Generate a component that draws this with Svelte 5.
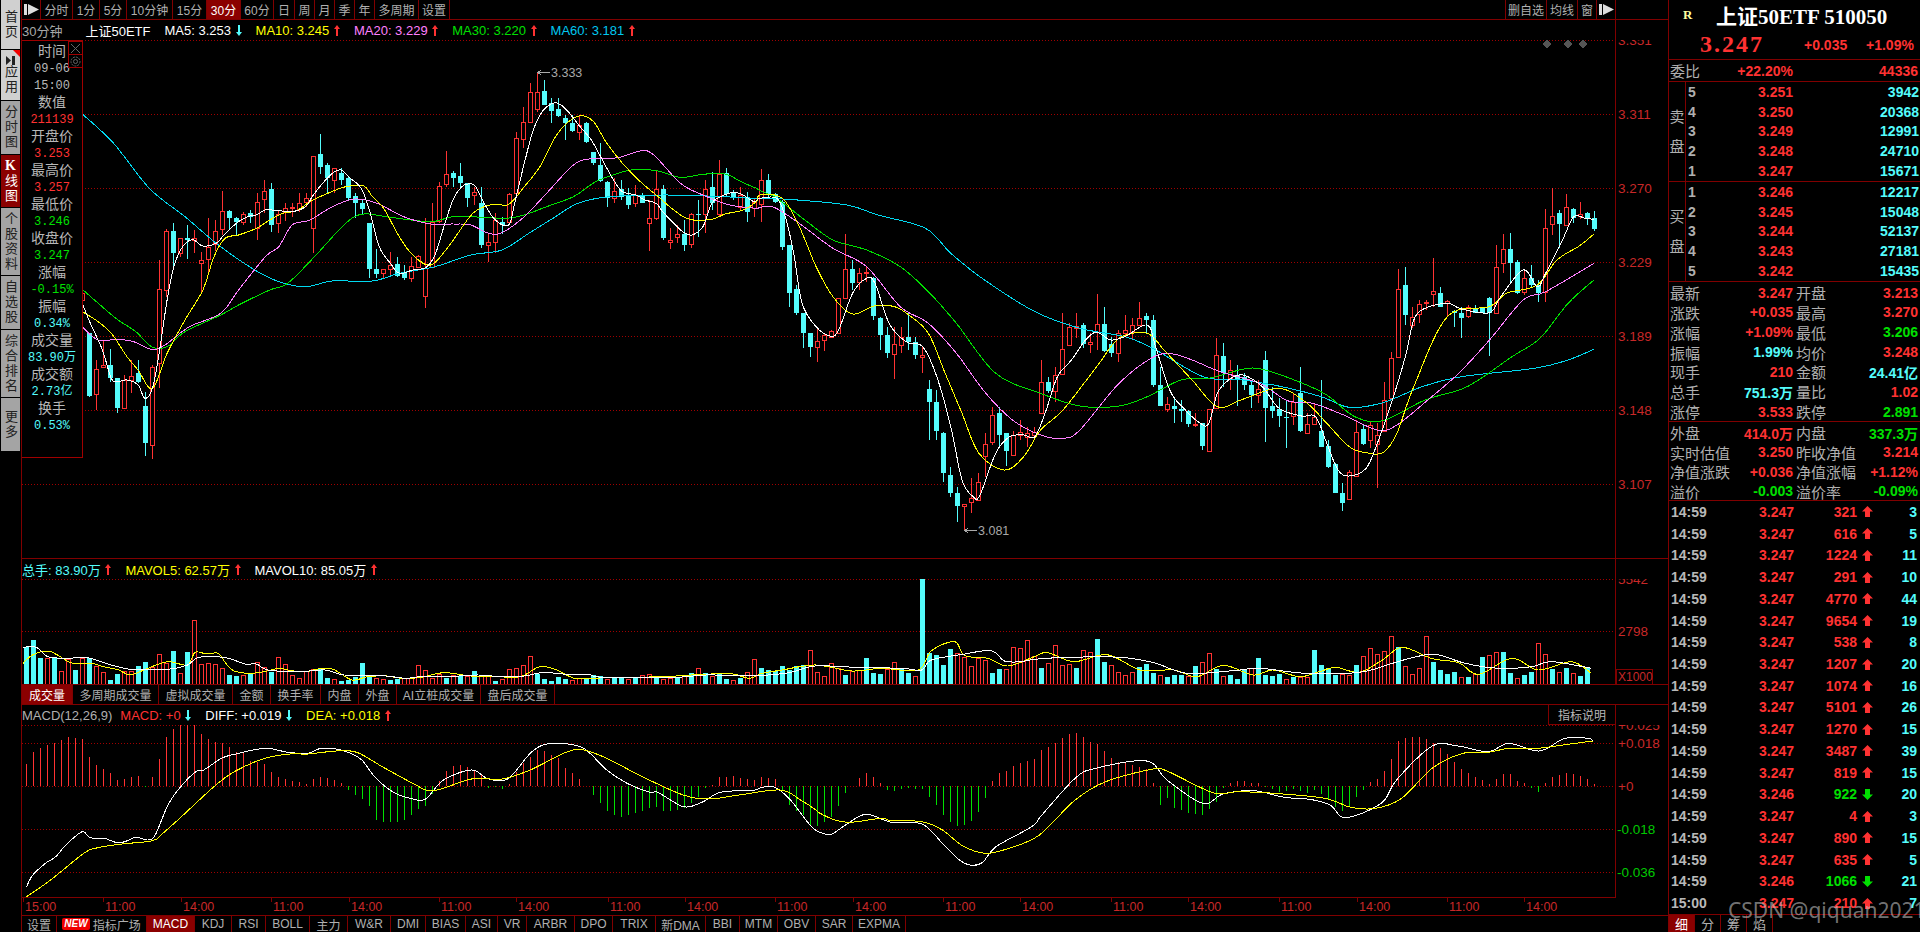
<script>
  // Measured off the chart. One candle every 7px, first slot at x=26.5.
  const RED = "#ff3232";
  const CYAN = "#54fcfc";
  const slot = (i) => 26.5 + 7 * i;

  // type + bodyTop,bodyBottom,wickTop,wickBottom in page pixels, from slot 8
  const candleText = `r293,300,285,312 c333,396,333,397 r369,394,360,410 r365,367,340,367 c365,378,349,382 c378,408,378,413 r380,408,375,408 r376,380,360,393 c373,382,360,383
  c406,443,392,456 r367,445,365,459 r289,363,260,388 r231,290,229,297 c231,253,223,267 r238,253,238,257 c238,240,225,259 r238,240,230,253 r260,263,252,292 r247,259,218,272
  r231,244,220,251 r211,229,191,235 c211,218,210,230 c218,222,217,235 r214,222,212,225 c213,217,210,223 r202,228,193,240 r191,199,180,213 c189,225,183,232 r214,223,210,233
  r208,212,203,221 r207,208,203,217 r203,209,193,212 r198,202,193,207 r156,228,156,253 c154,167,134,174 c165,178,163,194 r168,180,168,193 c173,180,168,185 c178,198,177,200
  c196,203,193,218 c203,209,200,215 c223,269,223,278 c269,274,249,278 r269,273,269,278 r265,269,252,277 c264,276,257,277 c273,278,265,280 r266,278,257,282 r256,267,255,268
  r268,296,218,308 r222,267,203,268 r186,221,182,223 r174,184,151,187 c173,178,171,187 c176,183,163,187 c183,198,183,207 r192,195,187,205 c203,245,187,248 r242,245,233,262
  r220,242,213,253 c222,225,217,234 r194,222,193,223 r138,193,132,193 r122,139,107,148 r92,122,83,123 r92,109,73,112 c91,105,80,105 c103,111,98,123 c109,116,98,117
  c118,123,115,140 c123,131,115,132 r125,132,115,140 c123,142,122,143 c152,163,152,165 c165,181,143,182 c182,198,181,207 r191,198,178,203 c189,197,180,200 c196,205,188,209
  r195,203,185,207 c196,203,193,203 r218,223,200,251 r189,218,170,220 c189,238,185,240 r240,242,228,249 r234,237,225,243 c234,245,220,251 r214,244,213,248 c214,215,200,237
  r189,214,180,233 c187,203,172,210 r174,214,160,217 c173,194,168,197 c193,197,190,200 r195,207,187,210 c197,212,192,222 r202,208,198,217
  r180,204,169,222 c180,194,174,198 c194,202,193,203 c202,247,200,250 c245,293,245,307 c289,313,285,315 c313,333,313,348 c333,347,333,357 r341,347,327,362 r335,340,333,351
  r331,337,330,338 r298,333,298,333 r269,298,234,298 c269,283,260,290 r273,282,268,290 r272,273,267,282 c278,316,277,320 c318,335,317,350 c335,353,327,358 r344,354,327,379
  r337,345,327,353 c337,342,313,350 c342,355,337,359 r355,357,347,373 c389,402,380,440 c402,431,390,440 c433,473,432,482 c475,493,467,497 c493,506,487,522 r504,506,504,531
  r498,502,478,513 r482,500,473,500 r444,456,433,477 r415,442,407,445 c413,435,407,447 c433,451,433,466 r435,455,431,455 r432,435,420,440 r433,437,427,447 r432,435,427,440
  r382,413,360,414 c382,391,377,393 r375,391,367,402 r349,374,313,375 r327,345,323,346 r326,328,313,338 c325,344,323,348 r342,344,333,353 r324,332,294,350 c324,351,307,352
  c344,353,337,357 r333,353,330,362 r330,333,315,335 r325,332,318,340 r318,325,302,325 c316,320,313,333 c320,385,315,387 c385,406,367,406 r404,409,397,412 c406,409,397,423
  c409,411,400,422 c411,424,410,427 r424,425,413,427 c423,446,423,450 r409,451,409,451 r355,408,338,408 c356,373,343,387 r370,378,360,390 c375,380,365,406 c377,385,373,390
  c385,395,380,408 r389,395,380,403 c360,408,351,442 c406,411,387,418 c409,416,398,427 c417,418,400,448 r402,416,393,425 c393,431,367,432 r424,433,413,433 r417,424,403,425
  c431,447,380,447 c446,467,440,468 c464,493,463,493 c493,503,483,511 r472,499,470,499 r432,476,420,477 c429,444,425,445 r425,440,422,448 r435,444,423,488 r400,431,382,432
  r358,398,352,400 r289,357,269,358 c285,315,267,325 r317,325,307,328 r304,314,300,323 r302,303,300,310 r291,294,258,307 c293,307,287,307 r301,303,300,317 c311,313,310,327
  c313,318,307,338 r307,316,305,318 c309,313,305,313 c308,313,307,313 c298,313,297,356 r267,313,245,314 r249,263,234,273 c249,263,233,283 c262,293,260,294 r278,292,270,295
  c278,285,265,288 c285,293,280,302 r228,292,209,302 r216,224,188,235 c213,224,210,248 r207,225,194,226 c209,218,208,223 r214,216,202,219 c213,219,212,225 c218,229,211,231`;

  const candles = candleText.trim().split(/\s+/).map((s, n) => {
    const [top, bottom, high, low] = s.slice(1).split(",").map(Number);
    return { up: s[0] === "r", x: slot(n + 8), top, bottom, high, low };
  });

  // volume bar tops, 3x scale
  const volLeft = `c292 c270 c325 r323 c322 r363 r327 c360 r325 c325 r348 r367 c390 c372 r363 r363 c348 c337 r352 r312 r338 c303 r370 c306 r211 r342 r340 r342 r355 c375 c378 r375 c370 r337 r350 c365 r322 r343 r375 r385 r362 r358 c358 c384 r388 c393 c390 c382 c340 c380 r385 r387 c390 c388 r385 r385 r345 r360 r385 r372 c385 r375 c378 r378 c363 r378 r378 c392 r388 r358 r355 r345 r318 c372 c388 c393 c381 c387 r390 r385 c385`;
  const volRight = `c350 c345 c348 r358 c352 c355 r358 c352 r345 r342 c350 r358 r355 c352 r345 c340 r325 c340 r348 c340 c357 r360 c355 r335 r298 c324 c330 c333 c318 c330 c318 c316 r270 r337 r348 r310 r323 c345 r333 r330 c294 c339 c342 r328 r307 c325 c340 r348 c57
  c280 c285 c315 c267 r280 r290 r318 r295 r300 c340 c327 r328 r262 r265 r240 r288 c324 r310 r255 r315 r312 c324 r270 r276 c237 c306 r315 r337 r345 r336 c320 c312 c340 r345 c352 c345 c345 r348 c318 r306 r280 c328 r348 c345 c356 c330 r324 c294 c345 c348 c342 r358 c350 r352 r350 c270 c315 c324 c345 r342 r345 c315 r288 r264 r282 r272 r228 c262 r318 r342 r324 r228 c306 c330 c342 c336 r351 c351 r342 c291 r285 r276 c276 c339 r354 c345 c336 r250 r282 c327 r336 c324 r340 c348 c321`;
  const parseVol = (text, originY) =>
    text.trim().split(/\s+/).map((s) => ({ up: s[0] === "r", top: originY + Number(s.slice(1)) / 3 }));
  const volumes = [...parseVol(volLeft, 550), ...parseVol(volRight, 560).slice(1)].map((v, i) => ({ ...v, x: slot(i) }));

  // MACD histogram ends, 3x scale, zero sits at 199
  const histValues = [
    132,96,84,75,70,60,51,54,57,111, 135,147,159,180,177,172,168,201,171,117,
    51,28,15,15,15,42,57,66,69,80, 96,96,123,125,132,156,171,177,183,187,
    192,177,171,174,180,189,209,224,238,258, 300,305,305,305,300,285,268,258,222,183,
    153,138,135,141,150,165,203,202,206,192, 155,130,112,90,92,105,115,145,160,177,
    197,225,248,273,285,290,285,280,272,265, 262,273,274,270,265,248,232,205,196,172,
    170,168,173,178,180,172,173,178,210,255, 272,285,317,318,
    305,292,258,220,197,175,160,172,190,210, 213,208,205,208,208,232,255,285,305,318,
    315,302,275,235,183,158,152,138,128,122, 117,90,80,70,55,42,39,52,67,72,
    94,113,127,130,135,140,148,190,255,235, 264,270,278,282,285,267,245,203,190,183,
    183,190,190,202,207,215,212,207,213,220, 211,222,240,260,272,262,230,210,186,178,
    153,117,63,54,51,51,58,70,85,102, 125,148,158,170,180,192,178,162,162,183,
    190,203,215,190,171,165,160,162,168,178, 193
  ];
  const hist = histValues.map((v, i) => ({ x: slot(i), y: 720 + v / 3, up: v < 199 }));

  // curve through points, read off crops at different scales
  const pts = (flat, ox, sx, oy) => {
    const out = [];
    for (let i = 0; i < flat.length; i += 2) out.push([ox + flat[i] / sx, oy + flat[i + 1] / 3]);
    return out;
  };
  const curve = (p) => {
    let d = `M${p[0][0].toFixed(1)} ${p[0][1].toFixed(1)}`;
    for (let i = 0; i < p.length - 1; i++) {
      const a = p[i - 1] ?? p[i], b = p[i], c = p[i + 1], e = p[i + 2] ?? c;
      const c1 = [b[0] + (c[0] - a[0]) / 6, b[1] + (c[1] - a[1]) / 6];
      const c2 = [c[0] - (e[0] - b[0]) / 6, c[1] - (e[1] - b[1]) / 6];
      d += `C${c1[0].toFixed(1)} ${c1[1].toFixed(1)} ${c2[0].toFixed(1)} ${c2[1].toFixed(1)} ${c[0].toFixed(1)} ${c[1].toFixed(1)}`;
    }
    return d;
  };
  const mainLine = (left, right) => curve([...pts(left, 60, 2.24, 60), ...pts(right, 760, 1.782, 160)]);
  const volLine = (left, right) => curve([...pts(left, 0, 2.613, 550), ...pts(right, 590, 1.508, 560)]);
  const macdLine = (left, right) => curve([...pts(left, 20, 1.96, 720), ...pts(right, 820, 1.96, 720)]);

  const maLines = [
    { color: "#00d8f0", d: mainLine(
      [50,162,120,250,200,385,280,470,350,550,430,625,490,665,550,680,610,663,700,663,760,640,840,620,920,585,990,570,1050,520,1110,470,1160,430,1230,410,1350,405,1450,408,1560,415],
      [0,115,50,118,155,135,210,165,295,205,340,280,400,360,490,455,570,505,650,530,700,565,790,650,860,660,930,680,1000,710,1050,742,1110,728,1180,680,1250,650,1380,625,1440,600,1486,568]) },
    { color: "#00e000", d: mainLine(
      [50,688,90,735,130,780,170,815,205,860,240,860,280,815,360,765,400,735,470,690,510,670,570,590,640,490,680,462,740,472,830,485,880,470,950,472,1000,475,1040,465,1090,440,1150,410,1200,365,1250,340,1290,328,1340,333,1390,352,1440,343,1490,342,1530,368,1560,385],
      [0,92,30,115,80,180,130,240,190,270,250,320,300,395,350,490,420,640,500,700,570,738,640,738,690,710,750,660,800,655,860,628,895,628,960,665,1010,705,1060,770,1110,782,1185,720,1260,680,1340,590,1390,535,1440,430,1486,360]) },
    { color: "#ff80ff", d: mainLine(
      [50,800,85,840,130,838,165,845,205,868,235,855,290,800,360,760,400,690,460,590,490,560,520,495,560,480,610,440,660,417,710,430,770,470,830,492,880,492,920,495,960,520,990,518,1040,470,1090,400,1150,315,1190,296,1250,293,1300,273,1330,285,1390,370,1440,405,1500,435,1560,445],
      [0,142,25,142,70,190,130,265,190,320,250,440,300,490,350,580,400,695,450,780,500,825,540,835,570,810,640,670,700,592,735,582,770,600,820,635,890,670,940,722,985,730,1040,765,1100,810,1135,795,1190,720,1245,640,1300,540,1360,420,1400,395,1486,310]) },
    { color: "#ffff00", d: mainLine(
      [50,755,80,780,115,820,150,890,175,930,207,985,240,880,280,780,320,690,345,590,370,535,400,525,440,505,470,480,500,460,530,452,560,425,600,400,640,380,680,378,700,410,725,445,760,530,790,585,830,615,870,560,925,460,970,433,1005,433,1040,380,1075,320,1110,230,1135,190,1165,167,1195,185,1225,250,1260,310,1300,365,1340,410,1375,450,1410,478,1460,478,1490,462,1530,450,1560,425],
      [0,105,40,115,70,200,100,320,130,410,165,462,205,437,240,440,265,465,300,520,330,640,360,760,390,880,435,930,470,890,500,810,540,750,600,620,640,535,690,520,720,570,770,660,815,740,860,718,925,685,975,730,1010,790,1050,860,1080,878,1110,878,1135,820,1165,680,1225,470,1300,440,1330,400,1385,375,1420,300,1460,258,1486,222]) },
    { color: "#ffffff", d: mainLine(
      [50,730,68,790,95,870,115,955,130,965,150,960,175,975,190,1015,207,985,222,880,240,720,255,620,270,570,285,545,300,540,320,558,350,550,364,530,395,490,420,470,440,465,460,450,490,452,520,455,550,440,565,410,585,375,610,340,630,330,650,355,675,385,695,460,715,560,740,610,760,640,790,630,820,622,840,585,860,500,880,420,900,380,915,372,930,378,950,430,975,480,1005,495,1020,420,1040,310,1060,210,1080,155,1100,132,1115,130,1135,150,1165,200,1190,240,1215,300,1240,360,1260,395,1290,405,1310,420,1335,430,1350,455,1375,490,1395,515,1415,525,1440,500,1460,430,1480,410,1510,397,1530,405,1555,425],
      [0,115,30,115,45,170,60,280,75,430,100,500,125,528,140,510,165,400,190,355,205,370,230,490,260,545,290,560,315,650,340,800,360,960,380,1010,392,1005,420,880,445,830,470,825,490,830,510,750,530,650,555,600,580,540,600,517,625,540,650,530,690,495,705,560,730,690,755,745,785,790,800,790,815,700,835,660,860,645,895,680,925,745,965,768,990,770,1010,850,1030,930,1050,948,1080,925,1100,850,1125,730,1150,590,1165,480,1185,445,1225,430,1250,447,1300,458,1320,410,1360,330,1385,380,1400,340,1430,240,1450,170,1470,175,1486,178]) }
  ];

  const volAvg = [
    { color: "#ffff00", d: volLine(
      [60,340,85,315,125,303,150,315,190,340,240,340,270,350,310,360,340,375,380,358,415,342,445,335,490,345,510,307,540,312,570,310,590,340,610,362,650,370,690,365,730,355,760,362,800,365,830,357,870,358,920,390,960,380,1010,378,1050,385,1100,382,1160,368,1230,378,1300,380,1360,380,1410,350,1450,358,1500,385,1540,385],
      [0,355,50,352,110,350,170,343,215,342,240,355,260,340,290,330,340,315,395,333,440,325,495,330,515,272,550,245,565,287,600,295,630,318,670,290,690,278,730,305,780,284,830,330,880,330,915,350,955,316,1000,345,1030,330,1070,350,1100,335,1125,322,1160,337,1195,300,1225,262,1270,296,1310,308,1340,343,1390,295,1430,330,1480,305,1510,340]) },
    { color: "#ffffff", d: volLine(
      [60,292,95,292,125,320,180,325,225,322,290,345,340,358,370,358,440,358,490,345,520,322,590,323,640,342,670,342,700,360,780,365,850,360,900,375,1000,377,1060,385,1100,380,1200,378,1250,375,1310,380,1370,378,1420,367,1470,372,1540,375],
      [0,343,20,352,130,352,175,345,250,347,300,338,340,318,400,322,470,325,500,330,515,300,565,282,605,272,625,303,650,305,670,298,720,292,800,292,850,308,900,340,970,332,1010,325,1080,340,1160,337,1210,310,1240,293,1275,283,1320,310,1370,325,1420,320,1450,305,1510,325]) }
  ];

  const macdLines = [
    { color: "#ffffff", d: macdLine(
      [13,500,25,465,50,430,70,410,90,375,122,335,137,353,165,355,190,368,205,365,228,352,250,360,265,345,290,255,315,200,345,155,360,150,395,115,420,103,480,85,525,97,565,100,585,87,610,85,640,95,670,120,695,170,730,215,765,235,795,237,830,180,885,150,915,175,945,182,965,165,1000,100,1025,75,1060,70,1105,85,1150,150,1190,190,1235,217,1250,217,1300,260,1335,248,1370,218,1410,212,1440,210,1455,202,1480,202,1510,240,1550,318],
      [0,337,22,343,50,315,90,283,140,307,200,312,240,370,275,422,300,436,320,425,345,380,415,320,435,285,500,175,540,145,640,123,680,180,750,250,790,222,850,212,910,232,960,238,1000,255,1030,293,1100,250,1130,180,1200,78,1250,78,1310,95,1350,70,1410,93,1460,55,1505,55,1515,63]) },
    { color: "#ffff00", d: macdLine(
      [13,530,60,480,125,400,150,384,200,372,260,362,280,340,320,285,380,200,420,155,480,115,530,102,565,102,620,93,660,97,710,140,770,190,810,212,885,177,945,177,1000,150,1070,97,1105,90,1150,115,1220,170,1300,225,1350,237,1410,225,1490,210,1530,240,1560,270],
      [0,280,30,300,60,307,120,295,140,302,200,305,240,330,280,378,325,400,370,385,430,345,500,240,560,185,650,148,680,153,770,218,820,215,890,220,990,235,1040,262,1090,265,1140,235,1200,145,1260,100,1310,97,1350,85,1400,86,1470,72,1515,63]) }
  ];

  const timeTicks = [103,181,271,349,439,516,608,685,775,853,943,1020,1111,1188,1279,1357,1447,1524];

  const topTabs = [
    ["分时",32],["1分",27],["5分",27],["10分钟",46],["15分",34],["30分",34,true],["60分",33],
    ["日",21],["周",20],["月",20],["季",20],["年",20],["多周期",44],["设置",31]
  ];
  const sideTabs = [
    { t: "首页", h: 49, cls: "light" }, { t: "应用", h: 50, cls: "light", skip: true }, { t: "分时图", h: 53 },
    { t: "K线图", h: 52, cls: "on" }, { t: "个股资料", h: 67 }, { t: "自选股", h: 53 }, { t: "综合排名", h: 67 }, { t: "更多", h: 53 }
  ];
  const gray = "#b8b8b8", green = "#00e000";
  const infoRows = [
    ["时间",gray,1],["09-06",gray],["15:00",gray],["数值",gray,1],["211139",RED],["开盘价",gray,1],["3.253",RED],
    ["最高价",gray,1],["3.257",RED],["最低价",gray,1],["3.246",green],["收盘价",gray,1],["3.247",green],["涨幅",gray,1],
    ["-0.15%",green],["振幅",gray,1],["0.34%",CYAN],["成交量",gray,1],["83.90万",CYAN],["成交额",gray,1],["2.73亿",CYAN],["换手",gray,1],["0.53%",CYAN]
  ];
  const volTabs = [["成交量",51,true],["多周期成交量",86],["虚拟成交量",74],["金额",38],["换手率",50],["内盘",38],["外盘",38],["AI立桩成交量",84],["盘后成交量",74]];
  const bottomTabs = [["MACD",48,true],["KDJ",37],["RSI",34],["BOLL",44],["主力",38],["W&R",43],["DMI",35],["BIAS",40],["ASI",32],["VR",29],["ARBR",48],["DPO",38],["TRIX",43],["新DMA",50],["BBI",34],["MTM",38],["OBV",38],["SAR",37],["EXPMA",53]];

  const sell = [[5,"3.251","3942"],[4,"3.250","20368"],[3,"3.249","12991"],[2,"3.248","24710"],[1,"3.247","15671"]];
  const buy = [[1,"3.246","12217"],[2,"3.245","15048"],[3,"3.244","52137"],[4,"3.243","27181"],[5,"3.242","15435"]];
  const stats = [
    ["最新","3.247",RED,"开盘","3.213",RED],["涨跌","+0.035",RED,"最高","3.270",RED],["涨幅","+1.09%",RED,"最低","3.206",green],
    ["振幅","1.99%",CYAN,"均价","3.248",RED],["现手","210",RED,"金额","24.41亿",CYAN],["总手","751.3万",CYAN,"量比","1.02",RED],["涨停","3.533",RED,"跌停","2.891",green]
  ];
  const stats2 = [
    ["外盘","414.0万",RED,"内盘","337.3万",green],["实时估值","3.250",RED,"昨收净值","3.214",RED],
    ["净值涨跌","+0.036",RED,"净值涨幅","+1.12%",RED],["溢价","-0.003",green,"溢价率","-0.09%",green]
  ];
  const trades = [
    ["14:59","3.247",321,3],["14:59","3.247",616,5],["14:59","3.247",1224,11],["14:59","3.247",291,10],["14:59","3.247",4770,44],
    ["14:59","3.247",9654,19],["14:59","3.247",538,8],["14:59","3.247",1207,20],["14:59","3.247",1074,16],["14:59","3.247",5101,26],
    ["14:59","3.247",1270,15],["14:59","3.247",3487,39],["14:59","3.247",819,15],["14:59","3.246",922,20,true],["14:59","3.247",4,3],
    ["14:59","3.247",890,15],["14:59","3.247",635,5],["14:59","3.246",1066,21,true],["15:00","3.247",210,7]
  ];
</script>

{#snippet thin(up)}
  <svg class="thin" width="6" height="11" viewBox="0 0 6 11">
    {#if up}
      <polygon points="3,0 6,4 4,4 4,11 2,11 2,4 0,4" fill={RED} />
    {:else}
      <polygon points="3,11 6,7 4,7 4,0 2,0 2,7 0,7" fill={CYAN} />
    {/if}
  </svg>
{/snippet}

{#snippet skipIcon()}
  <svg width="15" height="11" viewBox="0 0 15 11"><rect x="0" y="0" width="3" height="11" fill="#ddd" /><polygon points="4,0 15,5.5 4,11" fill="#ddd" /></svg>
{/snippet}

{#snippet gridLines(ys)}
  {#each ys as y}
    <line x1="22" x2="1615" y1={y + 0.5} y2={y + 0.5} class="dot" />
  {/each}
{/snippet}

{#snippet quoteRows(rows)}
  {#each rows as r}
    <div class="pair-row">
      <div class="pair"><span class="label">{r[0]}</span><span class="num" style="color:{r[2]}">{r[1]}</span></div>
      <div class="pair"><span class="label">{r[3]}</span><span class="num" style="color:{r[5]}">{r[4]}</span></div>
    </div>
  {/each}
{/snippet}

{#snippet book(title, rows)}
  <div class="book">
    <div class="book-title"><span>{title[0]}</span><span>{title[1]}</span></div>
    <div class="book-rows">
      {#each rows as r}
        <div class="book-row">
          <span class="lvl">{r[0]}</span>
          <span class="num red">{r[1]}</span>
          <span class="num cyan">{r[2]}</span>
        </div>
      {/each}
    </div>
  </div>
{/snippet}

<div class="page">
  <nav class="side">
    {#each sideTabs as tab}
      <div class="side-tab {tab.cls ?? ''}" style="height:{tab.h}px">
        {#if tab.skip}
          <span class="corner"></span>
          <svg width="9" height="9" viewBox="0 0 9 9"><rect x="6" width="3" height="9" fill="#222" /><polygon points="0,0 5,4.5 0,9" fill="#222" /></svg>
        {/if}
        {#if tab.t[0] === "K"}
          <b class="k">K</b><span class="vt">{tab.t.slice(1)}</span>
        {:else}
          <span class="vt">{tab.t}</span>
        {/if}
      </div>
    {/each}
  </nav>

  <main class="main">
    <div class="topbar">
      <div class="tab arrow" style="width:19px">{@render skipIcon()}</div>
      {#each topTabs as t}
        <div class="tab" class:active={t[2]} style="width:{t[1]}px">{t[0]}</div>
      {/each}
      <div class="top-right">
        <div class="tab first" style="width:42px">删自选</div>
        <div class="tab" style="width:31px">均线</div>
        <div class="tab" style="width:19px">窗</div>
        <div class="tab arrow" style="width:19px">{@render skipIcon()}</div>
      </div>
    </div>

    <section class="price">
      <div class="legend">
        <span class="l-item" style="color:#a8a8a8">30分钟</span>
        <span class="l-item" style="color:#fff;margin-left:9px">上证50ETF</span>
        <span class="l-item" style="color:#fff">MA5: 3.253 {@render thin(false)}</span>
        <span class="l-item" style="color:#ffff00">MA10: 3.245 {@render thin(true)}</span>
        <span class="l-item" style="color:#ff80ff">MA20: 3.229 {@render thin(true)}</span>
        <span class="l-item" style="color:#00e000">MA30: 3.220 {@render thin(true)}</span>
        <span class="l-item" style="color:#00c8f0">MA60: 3.181 {@render thin(true)}</span>
      </div>
      <svg class="plot" width="1646" height="518" viewBox="22 40 1646 518">
        {@render gridLines([40, 114, 188, 262, 336, 410, 484])}
        <line x1="1615.5" x2="1615.5" y1="40" y2="558" class="axis" />
        {#each candles as c}
          <line x1={c.x} x2={c.x} y1={c.high} y2={c.low} stroke={c.up ? RED : CYAN} />
          {#if c.up}
            <rect x={c.x - 2} y={c.top + 0.5} width="4" height={c.bottom - c.top} fill="#000" stroke={RED} />
          {:else}
            <rect x={c.x - 2.5} y={c.top} width="5" height={c.bottom - c.top} fill={CYAN} />
          {/if}
        {/each}
        {#each maLines as m}
          <path d={m.d} fill="none" stroke={m.color} />
        {/each}
        <polygon points="1542,44 1546.5,39.5 1551,44 1546.5,48.5" fill="#555" />
        <polygon points="1563,44 1567.5,39.5 1572,44 1567.5,48.5" fill="#555" />
        <polygon points="1578,44 1582.5,39.5 1587,44 1582.5,48.5" fill="#555" />
        <line x1="538" x2="550" y1="72.5" y2="72.5" stroke="#aaa" />
        <polyline points="541,70 538,72.5 541,75" fill="none" stroke="#aaa" />
        <text x="551" y="77" class="note">3.333</text>
        <line x1="965" x2="977" y1="530.5" y2="530.5" stroke="#aaa" />
        <polyline points="968,528 965,530.5 968,533" fill="none" stroke="#aaa" />
        <text x="978" y="535" class="note">3.081</text>
        <text x="1618" y="45" class="tick">3.351</text>
        <text x="1618" y="119" class="tick">3.311</text>
        <text x="1618" y="193" class="tick">3.270</text>
        <text x="1618" y="267" class="tick">3.229</text>
        <text x="1618" y="341" class="tick">3.189</text>
        <text x="1618" y="415" class="tick">3.148</text>
        <text x="1618" y="489" class="tick">3.107</text>
      </svg>
      <aside class="info">
        <button class="mini mini-x" aria-label="关闭">
          <svg width="11" height="11" viewBox="0 0 11 11"><path d="M1 1L10 10M10 1L1 10" stroke="#666" fill="none" /></svg>
        </button>
        <button class="mini mini-gear" aria-label="设置">
          <svg width="11" height="11" viewBox="0 0 11 11"><circle cx="5.5" cy="5.5" r="4.5" stroke="#666" stroke-dasharray="2 1" fill="none" /><circle cx="5.5" cy="5.5" r="2" stroke="#666" fill="none" /></svg>
        </button>
        {#each infoRows as row}
          <div class="info-row" class:cjk={row[2]} style="color:{row[1]}">{row[0]}</div>
        {/each}
      </aside>
    </section>

    <section class="volume">
      <div class="legend">
        <span class="l-item" style="color:{CYAN}">总手: 83.90万 {@render thin(true)}</span>
        <span class="l-item" style="color:#ffff00">MAVOL5: 62.57万 {@render thin(true)}</span>
        <span class="l-item" style="color:#fff">MAVOL10: 85.05万 {@render thin(true)}</span>
      </div>
      <svg class="plot" width="1646" height="106" viewBox="22 579 1646 106">
        {@render gridLines([579, 631])}
        <line x1="1615.5" x2="1615.5" y1="579" y2="685" class="axis" />
        {#each volumes as v}
          {#if v.up}
            <rect x={v.x - 2} y={v.top + 0.5} width="4" height={684 - v.top} fill="#000" stroke={RED} />
          {:else}
            <rect x={v.x - 2.5} y={v.top} width="5" height={684.5 - v.top} fill={CYAN} />
          {/if}
        {/each}
        {#each volAvg as m}
          <path d={m.d} fill="none" stroke={m.color} />
        {/each}
        <line x1="22" x2="1668" y1="684.5" y2="684.5" class="axis" />
        <text x="1618" y="584" class="tick">5542</text>
        <text x="1618" y="636" class="tick">2798</text>
        <rect x="1616.5" y="669.5" width="36" height="15" fill="none" class="axis" />
        <text x="1618" y="681" class="tick small">X1000</text>
      </svg>
      <div class="subtabs">
        {#each volTabs as t}
          <div class="tab" class:active={t[2]} style="width:{t[1]}px">{t[0]}</div>
        {/each}
      </div>
    </section>

    <section class="macd">
      <div class="legend">
        <span class="l-item" style="color:#b0b0b0">MACD(12,26,9)</span>
        <span class="l-item" style="color:{RED};margin-left:-6px">MACD: +0 {@render thin(false)}</span>
        <span class="l-item" style="color:#fff">DIFF: +0.019 {@render thin(false)}</span>
        <span class="l-item" style="color:#ffff00">DEA: +0.018 {@render thin(true)}</span>
        <button class="explain">指标说明</button>
      </div>
      <svg class="plot" width="1646" height="190" viewBox="22 725 1646 190">
        {@render gridLines([725, 743, 786, 829, 872])}
        <line x1="1615.5" x2="1615.5" y1="725" y2="897" class="axis" />
        {#each hist as h}
          <line x1={h.x} x2={h.x} y1="786" y2={h.y} stroke={h.up ? RED : "#00e000"} />
        {/each}
        {#each macdLines as m}
          <path d={m.d} fill="none" stroke={m.color} />
        {/each}
        <line x1="22" x2="1616" y1="897.5" y2="897.5" class="axis" />
        <text x="1618" y="730" class="tick">+0.025</text>
        <text x="1618" y="748" class="tick">+0.018</text>
        <text x="1618" y="791" class="tick">+0</text>
        <text x="1617" y="834" class="tick down">-0.018</text>
        <text x="1617" y="877" class="tick down">-0.036</text>
        <line x1="23.5" x2="23.5" y1="897" y2="902" class="axis" />
        <text x="25" y="911" class="time">15:00</text>
        {#each timeTicks as x, i}
          <line x1={x + 0.5} x2={x + 0.5} y1="897" y2="902" class="axis" />
          <text x={x + 2} y="911" class="time">{i % 2 ? "14:00" : "11:00"}</text>
        {/each}
      </svg>
    </section>

    <div class="bottombar">
      <div class="tab" style="width:35px">设置</div>
      <div class="tab" style="width:90px"><span class="new">NEW</span>指标广场</div>
      {#each bottomTabs as t}
        <div class="tab" class:active={t[2]} style="width:{t[1]}px">{t[0]}</div>
      {/each}
    </div>
  </main>

  <aside class="quote">
    <div class="name"><span class="r">R</span><span class="title">上证50ETF 510050</span></div>
    <div class="last">
      <span class="big">3.247</span>
      <span class="chg">+0.035</span>
      <span class="chg">+1.09%</span>
    </div>
    <div class="ratio">
      <span class="label">委比</span>
      <span class="num red">+22.20%</span>
      <span class="num red">44336</span>
    </div>
    {@render book("卖盘", sell)}
    {@render book("买盘", buy)}
    <div class="stats">{@render quoteRows(stats)}</div>
    <div class="stats second">{@render quoteRows(stats2)}</div>
    <div class="trades">
      {#each trades as t}
        <div class="trade">
          <span class="time-col">{t[0]}</span>
          <span class="num red">{t[1]}</span>
          <span class="num" class:red={!t[4]} class:grn={t[4]}>{t[2]}</span>
          <svg width="11" height="11" viewBox="0 0 11 11" class="fat">
            {#if t[4]}
              <polygon points="5.5,11 11,5.5 8,5.5 8,0 3,0 3,5.5 0,5.5" fill="#00e000" />
            {:else}
              <polygon points="5.5,0 11,5.5 8,5.5 8,11 3,11 3,5.5 0,5.5" fill={RED} />
            {/if}
          </svg>
          <span class="num cyan">{t[3]}</span>
        </div>
      {/each}
    </div>
    <div class="detail-tabs">
      <div class="tab active">细</div>
      <div class="tab">分</div>
      <div class="tab">筹</div>
      <div class="tab">焰</div>
    </div>
    <div class="mark">CSDN @qiquan2021</div>
  </aside>
</div>

<style>
  :global(body) {
    background: #000;
  }

  .page {
    display: flex;
    width: 1920px;
    height: 932px;
    overflow: hidden;
    background: #000;
    color: #b8b8b8;
    font-family: "Liberation Sans", "Noto Sans CJK SC", sans-serif;
    position: relative;
  }

  /* left vertical tabs */
  .side {
    width: 21px;
    display: flex;
    flex-direction: column;
    gap: 1px;
    padding: 0 1px 0 1px;
    box-sizing: border-box;
    flex: none;
  }

  .side-tab {
    background: #a4a4a4;
    color: #222;
    display: flex;
    flex-direction: column;
    align-items: center;
    justify-content: center;
    position: relative;
    flex: none;
    font-size: 13px;
  }

  .side-tab.light {
    background: #d0d0d0;
  }

  .side-tab.on {
    background: #8b0000;
    color: #fff;
  }

  .vt {
    writing-mode: vertical-rl;
    text-orientation: upright;
    letter-spacing: 2px;
  }

  .k {
    font-family: "Liberation Serif", serif;
    font-size: 14px;
    line-height: 14px;
    margin-bottom: 1px;
  }

  .corner {
    position: absolute;
    top: 0;
    right: 0;
    border-top: 7px solid #f00000;
    border-left: 7px solid transparent;
  }

  /* chart column */
  .main {
    width: 1647px;
    flex: none;
    border-left: 1px solid #800000;
    display: flex;
    flex-direction: column;
    box-sizing: border-box;
  }

  .tab {
    box-sizing: border-box;
    border-right: 1px solid #800000;
    display: flex;
    align-items: center;
    justify-content: center;
    font-size: 12px;
    color: #b0b0b0;
    white-space: nowrap;
    flex: none;
  }

  .tab.active {
    background: #8b0000;
    color: #fff;
  }

  .tab.first {
    border-left: 1px solid #800000;
  }

  .topbar {
    height: 20px;
    display: flex;
    border-bottom: 1px solid #800000;
    box-sizing: border-box;
  }

  .top-right {
    display: flex;
    margin-left: auto;
    margin-right: 52px;
  }

  .legend {
    width: 1594px;
    height: 20px;
    box-sizing: border-box;
    border-right: 1px solid #800000;
    display: flex;
    align-items: center;
    gap: 14px;
    font-size: 13px;
    white-space: nowrap;
    position: relative;
  }

  .l-item {
    display: inline-flex;
    align-items: center;
    white-space: pre;
  }

  .thin {
    margin-left: 1px;
  }

  .plot {
    display: block;
    shape-rendering: crispEdges;
  }

  .dot {
    stroke: #a00000;
    stroke-dasharray: 1 2;
  }

  .axis {
    stroke: #800000;
  }

  .tick {
    font-size: 13.5px;
    fill: #c82828;
  }

  .tick.down {
    fill: #00c800;
  }

  .tick.small {
    font-size: 12px;
  }

  .time {
    font-size: 12.5px;
    fill: #c82828;
  }

  .note {
    font-size: 12.5px;
    fill: #a8a8a8;
  }

  .price {
    position: relative;
    height: 538px;
    border-bottom: 1px solid #800000;
    box-sizing: content-box;
  }

  /* crosshair readout floating over the candles */
  .info {
    position: absolute;
    left: 0;
    top: 20px;
    width: 61px;
    height: 418px;
    box-sizing: border-box;
    padding-top: 3px;
    background: #000;
    border: 1px solid #a00000;
    border-left: none;
  }

  .info-row {
    height: 17px;
    line-height: 17px;
    text-align: center;
    font-family: "Liberation Mono", "Noto Sans CJK SC", monospace;
    font-size: 12px;
    white-space: nowrap;
  }

  .info-row.cjk {
    font-size: 14px;
  }

  .mini {
    position: absolute;
    right: 0;
    width: 14px;
    height: 14px;
    padding: 0;
    background: #000;
    border: 1px solid #a00000;
    border-right: none;
    display: flex;
    align-items: center;
    justify-content: center;
  }

  .mini-x {
    top: 0;
  }

  .mini-gear {
    top: 13px;
  }

  .volume {
    display: flex;
    flex-direction: column;
  }

  .subtabs {
    height: 20px;
    display: flex;
    box-sizing: border-box;
    border-bottom: 1px solid #800000;
  }

  .macd {
    display: flex;
    flex-direction: column;
  }

  .explain {
    position: absolute;
    right: 0;
    top: 0;
    width: 67px;
    height: 20px;
    padding: 0;
    background: #000;
    color: #b8b8b8;
    border: 1px solid #800000;
    border-top: none;
    border-right: none;
    font: 12px "Noto Sans CJK SC", sans-serif;
  }

  .bottombar {
    height: 17px;
    display: flex;
    border-top: 1px solid #800000;
    box-sizing: border-box;
  }

  .new {
    background: #f00000;
    color: #fff;
    font-size: 10px;
    font-style: italic;
    font-weight: bold;
    line-height: 12px;
    padding: 0 2px;
    border-radius: 2px;
    margin-right: 3px;
  }

  /* right quote column */
  .quote {
    flex: 1;
    border-left: 1px solid #800000;
    display: flex;
    flex-direction: column;
    position: relative;
    font-size: 14px;
  }

  .num {
    font-weight: bold;
    font-size: 14px;
    text-align: right;
    white-space: nowrap;
  }

  .red {
    color: #ff3232;
  }

  .cyan {
    color: #54fcfc;
  }

  .grn {
    color: #00e000;
  }

  .label {
    color: #b0b0b0;
    font-size: 15px;
    white-space: nowrap;
  }

  .name {
    height: 30px;
    display: flex;
    align-items: center;
    position: relative;
    padding-left: 47px;
  }

  .r {
    position: absolute;
    left: 14px;
    color: #ffffa0;
    font: bold 13px "Liberation Serif", serif;
  }

  .title {
    font: bold 21px "Liberation Serif", "Noto Sans CJK SC", serif;
    color: #fff;
    white-space: nowrap;
  }

  .last {
    height: 30px;
    box-sizing: border-box;
    display: grid;
    grid-template-columns: 104px 62px 1fr;
    padding-left: 31px;
    align-items: center;
    border-bottom: 1px solid #800000;
  }

  .big {
    font: bold 24px "Liberation Serif", serif;
    letter-spacing: 2px;
    color: #ff3232;
  }

  .chg {
    font: bold 14px "Liberation Sans", sans-serif;
    color: #ff3232;
  }

  .ratio {
    height: 22px;
    box-sizing: border-box;
    display: grid;
    grid-template-columns: 48px 75px 125px;
    padding-left: 1px;
    align-items: center;
    border-bottom: 1px solid #800000;
  }

  .book {
    height: 100px;
    box-sizing: border-box;
    display: flex;
    border-bottom: 1px solid #800000;
  }

  .book-title {
    width: 17px;
    box-sizing: border-box;
    border-right: 1px solid #800000;
    display: flex;
    flex-direction: column;
    justify-content: center;
    gap: 14px;
    color: #b0b0b0;
    font-size: 15px;
    line-height: 16px;
    text-align: center;
    flex: none;
  }

  .book-rows {
    display: flex;
    flex-direction: column;
  }

  .book-row {
    height: 20px;
    display: grid;
    grid-template-columns: 21px 84px 126px;
    align-items: center;
    padding-left: 2px;
  }

  .lvl {
    color: #b0b0b0;
    font-weight: bold;
    font-size: 14px;
  }

  .stats {
    height: 140px;
    box-sizing: border-box;
    border-bottom: 1px solid #800000;
    display: flex;
    flex-direction: column;
  }

  .stats.second {
    height: 79px;
  }

  .pair-row {
    flex: 1;
    display: grid;
    grid-template-columns: 126px 122px;
    align-items: center;
    padding-left: 1px;
    min-height: 0;
  }

  .pair {
    display: flex;
    justify-content: space-between;
    align-items: center;
    padding-right: 3px;
  }

  .pair + .pair {
    padding-right: 0;
  }

  .trades {
    flex: 1;
    display: flex;
    flex-direction: column;
    min-height: 0;
  }

  .trade {
    flex: 1;
    display: grid;
    grid-template-columns: 45px 78px 63px 19px 41px;
    align-items: center;
    padding-left: 2px;
  }

  .time-col {
    color: #b8b8b8;
    font-weight: bold;
    font-size: 14px;
  }

  .fat {
    margin-left: 5px;
  }

  .detail-tabs {
    height: 18px;
    display: flex;
    border-top: 1px solid #800000;
    box-sizing: border-box;
  }

  .detail-tabs .tab {
    width: 26px;
    font-size: 13px;
  }

  .mark {
    position: absolute;
    left: 59px;
    bottom: 9px;
    font-family: "Noto Sans", sans-serif;
    font-size: 21px;
    line-height: 26px;
    color: rgba(190, 190, 190, 0.62);
    white-space: nowrap;
  }
</style>
